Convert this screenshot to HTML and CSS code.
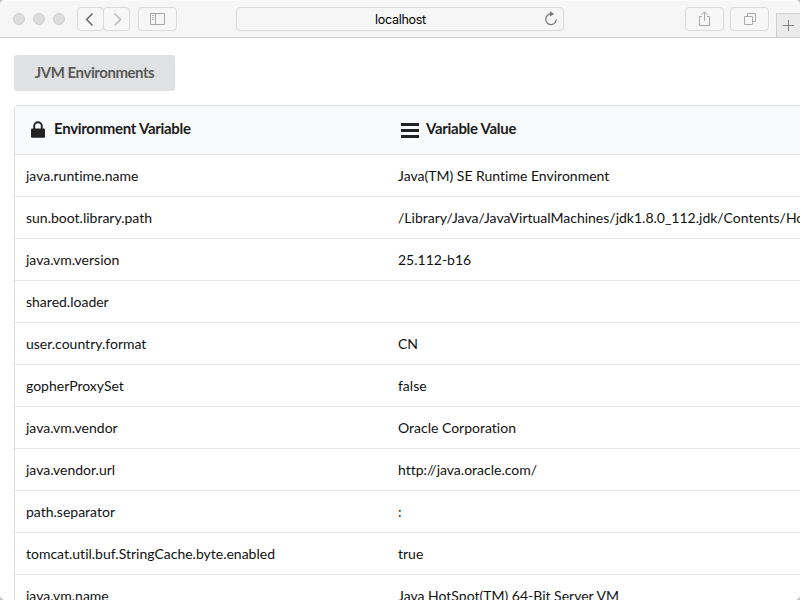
FILE: index.html
```html
<!DOCTYPE html>
<html lang="en">
<head>
<meta charset="utf-8">
<title>JVM Environments</title>
<link rel="stylesheet" href="styles.css">
</head>
<body>
<div class="window">
  <header class="toolbar">
    <div class="lights"><i></i><i></i><i></i></div>
    <div class="nav">
      <span class="btn back"><svg width="26" height="23" viewBox="0 0 26 23"><path d="M14.500 5.500L8.700 11.500l5.800 6" fill="none" stroke="#6c6c6c" stroke-width="1.600"/></svg></span>
      <span class="btn forward"><svg width="26" height="23" viewBox="0 0 26 23"><path d="M10.500 5.500l6 6-6 6" fill="none" stroke="#bdbdbd" stroke-width="1.600"/></svg></span>
    </div>
    <span class="btn sidebar"><svg width="37" height="22" viewBox="0 0 37 22"><path d="M11.500 5.500h14v11h-14zM16.500 5.500v11" fill="none" stroke="#a6a6a6"/><path d="M13 7.500h2M13 9.500h2M13 11.500h2" stroke="#b5b5b5"/></svg></span>
    <div class="address"><span>localhost</span><svg class="reload" width="14" height="16" viewBox="0 0 14 16"><path d="M7.500 3A5.300 5.300 0 1 0 12.300 8.300" fill="none" stroke="#777" stroke-width="1.200"/><path d="M6 .2L10.200 3 6 5.500z" fill="#777"/></svg></div>
    <span class="btn share"><svg width="37" height="22" viewBox="0 0 37 22"><path d="M16 8.500h-2.500v9h10v-9H21M18.500 13V4M15.500 6.800l3-3 3 3" fill="none" stroke="#aaa"/></svg></span>
    <span class="btn tabs"><svg width="37" height="22" viewBox="0 0 37 22"><path d="M13.500 8.500h8v8h-8zM16.500 8.500v-3h8v8h-3" fill="none" stroke="#aaa"/></svg></span>
    <span class="newtab"><svg width="23" height="23" viewBox="0 0 23 23"><path d="M6 11.500h11M11.500 6v11" stroke="#808080"/></svg></span>
  </header>
  <main class="page">
    <div class="title">JVM Environments</div>
    <table class="vars">
      <thead><tr>
        <th><div class="head"><svg class="lock" width="14" height="17" viewBox="0 0 14 17"><path d="M3.200 8V5a3.800 3.800 0 0 1 7.600 0v3" fill="none" stroke="#222" stroke-width="1.900"/><rect y="7.500" width="14" height="9.200" rx="1" fill="#222"/></svg><span>Environment Variable</span></div></th>
        <th><div class="head"><svg class="bars" width="18" height="17" viewBox="0 0 18 17"><path d="M0 2.500h18M0 8.500h18M0 14.500h18" stroke="#222" stroke-width="3"/></svg><span>Variable Value</span></div></th>
      </tr></thead>
      <tbody>
        <tr><td>java.runtime.name</td><td>Java(TM) SE Runtime Environment</td></tr>
        <tr><td>sun.boot.library.path</td><td>/Library/Java/JavaVirtualMachines/jdk1.8.0_112.jdk/Contents/Home/jre/lib</td></tr>
        <tr><td>java.vm.version</td><td>25.112-b16</td></tr>
        <tr><td>shared.loader</td><td></td></tr>
        <tr><td>user.country.format</td><td>CN</td></tr>
        <tr><td>gopherProxySet</td><td>false</td></tr>
        <tr><td>java.vm.vendor</td><td>Oracle Corporation</td></tr>
        <tr><td>java.vendor.url</td><td>http://java.oracle.com/</td></tr>
        <tr><td>path.separator</td><td>:</td></tr>
        <tr><td>tomcat.util.buf.StringCache.byte.enabled</td><td>true</td></tr>
        <tr><td>java.vm.name</td><td>Java HotSpot(TM) 64-Bit Server VM</td></tr>
      </tbody>
    </table>
  </main>
</div>
</body>
</html>
```
FILE: styles.css
```css
* { box-sizing: border-box; }
html, body { margin: 0; height: 600px; overflow: hidden; }
body { background: #c4c4c4; font-family: Lato, sans-serif; font-size: 14px; font-variant-ligatures: none; color: #111; }
svg { display: block; flex: none; }
.window { width: 800px; height: 600px; overflow: hidden; background: #fff; border-radius: 5px; }
.toolbar { display: flex; align-items: flex-start; height: 38px; padding: 6px 0 0 13px; background: #f6f6f6; border-top: 1px solid #fbfbfb; border-bottom: 1px solid #cecece; }
.lights { display: flex; gap: 8px; margin: 6px 12px 0 0; }
.lights i { width: 12px; height: 12px; border-radius: 50%; background: #dcdcdc; border: 1px solid #cfcfcf; }
.btn { display: flex; align-items: center; justify-content: center; height: 24px; border: 1px solid #dadada; border-radius: 4px; background: #f7f7f7; flex: none; overflow: hidden; }
.nav { display: flex; margin-right: 8px; }
.back { width: 27px; }
.forward { width: 27px; margin-left: -1px; }
.sidebar, .share, .tabs { width: 39px; }
.address { display: flex; align-items: center; justify-content: center; position: relative; width: 328px; height: 24px; margin: 0 121px 0 59px; border: 1px solid #dadada; border-radius: 4px; font: 12.5px Inter, sans-serif; letter-spacing: -.28px; color: #000; }
.address span { padding: 1px 0 0 1px; }
.reload { position: absolute; right: 5px; top: 3px; }
.tabs { margin-left: 6px; }
.newtab { width: 24px; height: 24px; margin: 6px 0 0 7px; border: 1px solid #cecece; border-width: 1px 0 0 1px; background: #ebebeb; }
.page { padding: 17px 0 0 14px; }
.title { width: 161px; height: 36px; line-height: 35px; text-align: center; border-radius: 3px; background: #e0e1e2; color: #5a5a5a; font-weight: 700; font-size: 15px; letter-spacing: -.45px; }
.vars { width: 1116px; margin-top: 14px; table-layout: fixed; border-collapse: separate; border-spacing: 0; border: 1px solid #dededf; border-radius: 4px; }
th { height: 49px; padding: 0 16px; background: #f9fafb; border-bottom: 1px solid #e1e2e3; text-align: left; font-weight: 700; font-size: 15px; letter-spacing: -.3px; color: #1c1c1c; }
th:first-child { width: 372px; border-top-left-radius: 3px; }
.head { display: flex; align-items: center; height: 48px; line-height: 18px; }
.head span { padding-bottom: 4px; }
th .lock { margin: 0 9px 1px 0; }
th .bars { margin: 1px 7px 0 -2px; }
td { height: 42px; padding: 0 11px; border-bottom: 1px solid #e8e8e9; white-space: nowrap; line-height: 20px; }
```
